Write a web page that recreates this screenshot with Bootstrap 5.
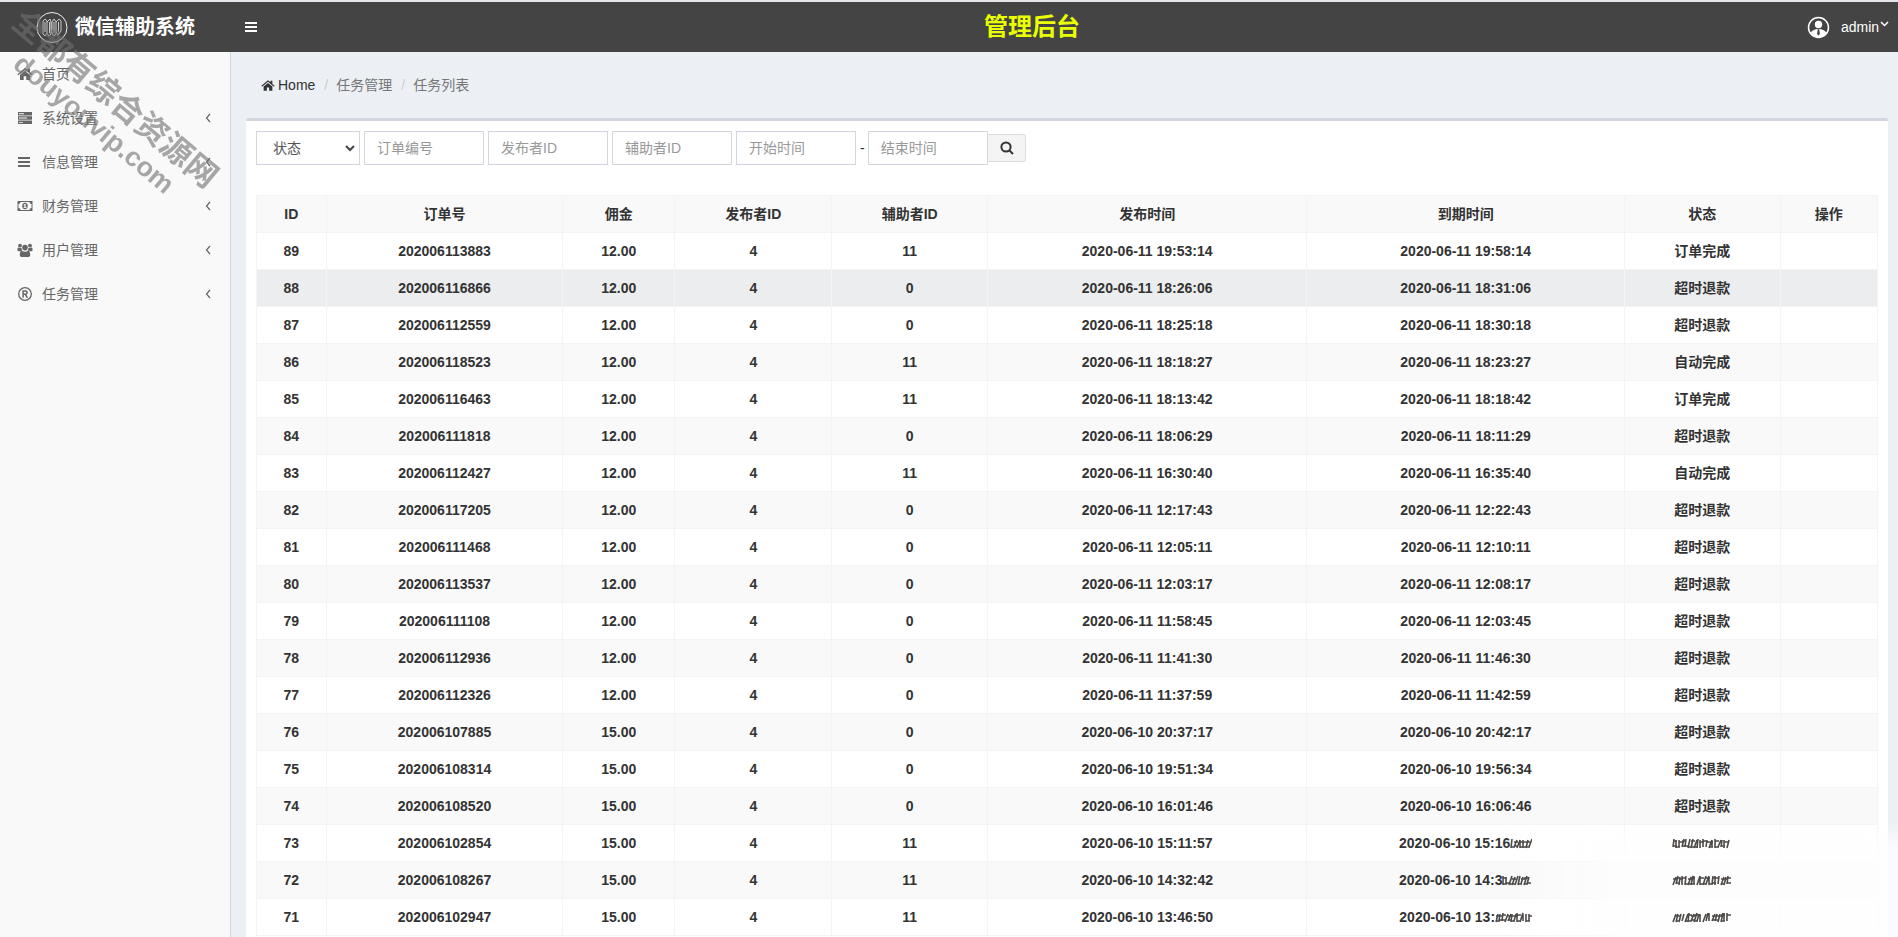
<!DOCTYPE html>
<html lang="zh-CN">
<head>
<meta charset="utf-8">
<meta name="viewport" content="width=device-width, initial-scale=1">
<title>管理后台</title>
<link href="https://cdn.jsdelivr.net/npm/bootstrap@5.3.0/dist/css/bootstrap.min.css" rel="stylesheet">
<style>
body{font:14px/20px "Liberation Sans","Noto Sans CJK SC",sans-serif;color:#333;background:#ecf0f5;height:100vh;overflow:hidden}
a{color:inherit;text-decoration:none}
svg{display:block;flex:none}
.topbar{background:#444;color:#fff;height:52px;border-top:2px solid #e3e5e8}
.brand-area{width:230px;font-size:20px;font-weight:700;padding-left:36px}
.brand-area svg{margin-right:7px}
.page-title{font-size:24px;line-height:30px;font-weight:700;color:#eaff00;margin:0}
.burger{width:44px;height:50px;border:0;background:none;color:#fff;padding:0 14px}
.user-link{width:108px;padding-left:17px}
.user-link .face{margin-right:11px}
.user-link .caret{margin:-6px 0 0 1px}
.side{width:231px;flex:none;background:#f9f9f9;border-right:1px solid #d2d6de;color:#666;min-height:calc(100vh - 52px)}
.side a{height:44px;padding:0 19px 0 17px}
.side a .glyph{margin-right:9px}
.main-area{min-width:0;padding:0 10px 0 15px}
.crumbs{height:66px;padding-left:15px;color:#777}
.crumbs a{color:#333}
.crumbs a svg{margin-right:3px}
.crumbs li+li::before{content:"/";color:#ccc;padding:0 8px 0 9px}
.panel{background:#fff;border-top:3px solid #d2d6de;border-radius:3px;padding:10px}
.filters .form-control,.filters .form-select{width:120px;height:34px;border:1px solid #d2d6de;border-radius:0;font-size:14px;line-height:20px;padding:6px 12px;color:#555;margin-right:4px}
.filters .form-select{width:104px;padding:6px 16px;appearance:none;background:#fff url("data:image/svg+xml,%3Csvg xmlns='http://www.w3.org/2000/svg' viewBox='0 0 10 7'%3E%3Cpath d='M1 1l4 4 4-4' fill='none' stroke='%23444' stroke-width='2'/%3E%3C/svg%3E") no-repeat right 4px center/10px 7px}
.filters .form-control::placeholder{color:#999}
.filters .form-control.last-field{margin:0 0 0 3px}
.find-btn{width:38px;height:28px;border:1px solid #ddd;border-left:0;border-radius:0 3px 3px 0;background:#f4f4f4;color:#333;padding:0 0 0 12px}
.orders{margin:30px 0 0;table-layout:fixed;font-weight:700;text-align:center;border-color:#f4f4f4}
.orders>:not(caption)>*>*{padding:8px;border:1px solid #f4f4f4;height:37px;line-height:20px;color:#333;background:#fff;white-space:nowrap}
.orders>thead>tr>th,.orders>tbody>tr:nth-child(even)>td{background:#f9f9f9}
.orders>tbody>tr.picked>td{background:#ebedef}
.ink{display:inline-block;vertical-align:-1px}
.fade-patch{position:absolute;right:0;bottom:0;width:398px;height:116px;pointer-events:none;background:linear-gradient(90deg,rgba(254,254,254,0),rgba(254,254,254,.8) 30%,rgba(254,254,254,.8) 93%,rgba(252,253,254,.75));-webkit-mask:linear-gradient(180deg,transparent,#000 24px);mask:linear-gradient(180deg,transparent,#000 24px)}
.orders .ink{position:relative;z-index:2}
.stamp{position:absolute;left:-23px;top:78px;width:256px;transform:rotate(40deg);text-align:center;font-weight:700;color:#707070;opacity:.6;font-size:32px;line-height:34px;pointer-events:none;white-space:nowrap}
.stamp span{display:block;font-size:27px;line-height:32px}
</style>
</head>
<body class="position-relative">
<svg class="d-none" xmlns="http://www.w3.org/2000/svg">
 <symbol id="i-home" viewBox="0 0 16 14"><path fill="currentColor" d="M8 4L13 8V13H9.300V9.300H6.700V13H3V8zM8 1L10.800 3.300V1.500H13V5.200L15.600 7.300L14.800 8.300L8 2.800L1.200 8.300L.4 7.300z"/></symbol>
 <symbol id="i-server" viewBox="0 0 16 14"><path fill="currentColor" fill-rule="evenodd" d="M1 1h14v3.500H1zm1 1.300v.9h5v-.9zM1 5.300h14v3.500H1zm1 1.300v.9h8v-.9zM1 9.600h14v3.500H1zm1 1.300v.9h4v-.9z"/></symbol>
 <symbol id="i-bars" viewBox="0 0 16 14"><path fill="currentColor" d="M1 2h12v2H1zm0 4h12v2H1zm0 4h12v2H1z"/></symbol>
 <symbol id="i-money" viewBox="0 0 16 14"><path fill="currentColor" fill-rule="evenodd" d="M.5 2h15v10H.5zM3.500 3a2 2 0 0 1-2 2v4a2 2 0 0 1 2 2h9a2 2 0 0 1 2-2V5a2 2 0 0 1-2-2zM8 3.800c3.700 0 3.700 6.400 0 6.400s-3.700-6.400 0-6.400zM7.600 5L6.500 5.900l.4.600.5-.3v2h-.8V9h2.900v-.8h-.8V5z"/></symbol>
 <symbol id="i-users" viewBox="0 0 16 14"><g fill="currentColor"><circle cx="3" cy="2.600" r="1.900"/><circle cx="13" cy="2.600" r="1.900"/><circle cx="8" cy="4.600" r="2.800"/><path d="M.5 7.500V6c0-1.500.8-1.800 1.500-1.300 1 .5 1.800.5 2.400.1.100 1.200.4 1.900 1 2.600-.8 0-1.500.3-2 .8H1.600C.9 8.200.5 8 .5 7.500zM15.500 7.500V6c0-1.500-.8-1.800-1.500-1.300-1 .5-1.800.5-2.400.1-.1 1.200-.4 1.900-1 2.600.8 0 1.500.3 2 .8h1.800c.7 0 1.100-.2 1.100-.7zM2.800 12c0-2.500.6-4.300 2.200-4.300 1.500 1.300 4.500 1.300 6 0 1.600 0 2.200 1.800 2.200 4.300 0 1.200-.7 2-1.800 2H4.600c-1.100 0-1.800-.8-1.800-2z"/></g></symbol>
 <symbol id="i-reg" viewBox="0 0 16 14"><g fill="none" stroke="currentColor"><circle cx="8" cy="7" r="6.300" stroke-width="1.300"/><path stroke-width="1.500" d="M6.100 10.800V3.900h2.200c2.400 0 2.400 3.400 0 3.400H6.100m2.200 0l2.100 3.500"/></g></symbol>
 <symbol id="i-left" viewBox="0 0 6 10"><path d="M5 1L1.500 5 5 9" fill="none" stroke="currentColor" stroke-width="1.200"/></symbol>
</svg>
<header class="topbar d-flex align-items-center">
 <a href="#" class="brand-area d-flex align-items-center">
  <svg width="32" height="32" viewBox="0 0 32 32" fill="none" stroke="#eee"><circle cx="16" cy="16.500" r="15"/><path d="M7 23V10l2-2 2 2v12l-2 3zM11 11l3-3 1 3v12l-2 2-2-3M16 11l2-3 2 3v12l-2 2-2-3zM20 11l3-3 2 2v10l-3 4-2-3M9 11v10M13.500 11v11M18 11v11M22.500 11v10" stroke-width=".8"/></svg>微信辅助系统</a>
 <button type="button" class="burger" aria-label="菜单"><svg width="16" height="14"><use href="#i-bars"/></svg></button>
 <h1 class="page-title flex-grow-1 text-center">管理后台</h1>
 <a href="#" class="user-link d-flex align-items-center">
  <svg class="face" width="23" height="23" viewBox="0 0 23 23"><circle cx="11.500" cy="11.500" r="10" fill="none" stroke="#fff" stroke-width="1.500"/><circle cx="11.500" cy="8.500" r="3.700" fill="#fff"/><path fill="#fff" d="M3.500 17c1.500-2.500 4-3.700 6.500-4l1.500 1 1.500-1c2.500.3 5 1.500 6.500 4-4 6-12 6-16 0z"/><path fill="#444" d="M10.700 14h1.600l.6 4-1.400 1.500-1.400-1.500z"/></svg>admin<svg class="caret" width="9" height="6" viewBox="0 0 9 6"><path d="M1 1l3.500 3.500L8 1" fill="none" stroke="#fff" stroke-width="1.500"/></svg></a>
</header>
<div class="d-flex">
 <nav class="side">
  <a href="#" class="d-flex align-items-center"><svg class="glyph" width="16" height="14"><use href="#i-home"/></svg>首页</a>
  <a href="#" class="d-flex align-items-center"><svg class="glyph" width="16" height="14"><use href="#i-server"/></svg>系统设置<svg class="ms-auto" width="6" height="10"><use href="#i-left"/></svg></a>
  <a href="#" class="d-flex align-items-center"><svg class="glyph" width="16" height="14"><use href="#i-bars"/></svg>信息管理<svg class="ms-auto" width="6" height="10"><use href="#i-left"/></svg></a>
  <a href="#" class="d-flex align-items-center"><svg class="glyph" width="16" height="14"><use href="#i-money"/></svg>财务管理<svg class="ms-auto" width="6" height="10"><use href="#i-left"/></svg></a>
  <a href="#" class="d-flex align-items-center"><svg class="glyph" width="16" height="14"><use href="#i-users"/></svg>用户管理<svg class="ms-auto" width="6" height="10"><use href="#i-left"/></svg></a>
  <a href="#" class="d-flex align-items-center"><svg class="glyph" width="16" height="14"><use href="#i-reg"/></svg>任务管理<svg class="ms-auto" width="6" height="10"><use href="#i-left"/></svg></a>
 </nav>
 <main class="main-area flex-grow-1">
  <ol class="crumbs list-unstyled d-flex align-items-center mb-0">
   <li><a href="#" class="d-flex align-items-center"><svg width="14" height="13"><use href="#i-home"/></svg>Home</a></li><li>任务管理</li><li>任务列表</li>
  </ol>
  <section class="panel">
   <form class="filters d-flex align-items-center">
    <select class="form-select" aria-label="状态"><option>状态</option></select>
    <input class="form-control" placeholder="订单编号" aria-label="订单编号">
    <input class="form-control" placeholder="发布者ID" aria-label="发布者ID">
    <input class="form-control" placeholder="辅助者ID" aria-label="辅助者ID">
    <input class="form-control" placeholder="开始时间" aria-label="开始时间">
    <span>-</span>
    <input class="form-control last-field" placeholder="结束时间" aria-label="结束时间">
    <button type="button" class="find-btn" aria-label="搜索"><svg width="14" height="14" viewBox="0 0 14 14" fill="none" stroke="currentColor" stroke-width="2"><circle cx="6" cy="6" r="4.600"/><path d="M9.400 9.400L13 13"/></svg></button>
   </form>
   <table class="table orders">
    <colgroup><col style="width:4.3%"><col style="width:14.6%"><col style="width:6.9%"><col style="width:9.7%"><col style="width:9.6%"><col style="width:19.7%"><col style="width:19.6%"><col style="width:9.6%"><col style="width:6%"></colgroup>
    <thead><tr><th>ID</th><th>订单号</th><th>佣金</th><th>发布者ID</th><th>辅助者ID</th><th>发布时间</th><th>到期时间</th><th>状态</th><th>操作</th></tr></thead>
    <tbody id="rows"></tbody>
   </table>
  </section>
 </main>
</div>
<div class="fade-patch"></div>
<div class="stamp">全都有综合资源网<span>douyouvip.com</span></div>
<script>
// id, order number, fee, helper, published, expires, status
const orders = `89|202006113883|12.00|11|2020-06-11 19:53:14|2020-06-11 19:58:14|订单完成
88|202006116866|12.00|0|2020-06-11 18:26:06|2020-06-11 18:31:06|超时退款
87|202006112559|12.00|0|2020-06-11 18:25:18|2020-06-11 18:30:18|超时退款
86|202006118523|12.00|11|2020-06-11 18:18:27|2020-06-11 18:23:27|自动完成
85|202006116463|12.00|11|2020-06-11 18:13:42|2020-06-11 18:18:42|订单完成
84|202006111818|12.00|0|2020-06-11 18:06:29|2020-06-11 18:11:29|超时退款
83|202006112427|12.00|11|2020-06-11 16:30:40|2020-06-11 16:35:40|自动完成
82|202006117205|12.00|0|2020-06-11 12:17:43|2020-06-11 12:22:43|超时退款
81|202006111468|12.00|0|2020-06-11 12:05:11|2020-06-11 12:10:11|超时退款
80|202006113537|12.00|0|2020-06-11 12:03:17|2020-06-11 12:08:17|超时退款
79|202006111108|12.00|0|2020-06-11 11:58:45|2020-06-11 12:03:45|超时退款
78|202006112936|12.00|0|2020-06-11 11:41:30|2020-06-11 11:46:30|超时退款
77|202006112326|12.00|0|2020-06-11 11:37:59|2020-06-11 11:42:59|超时退款
76|202006107885|15.00|0|2020-06-10 20:37:17|2020-06-10 20:42:17|超时退款
75|202006108314|15.00|0|2020-06-10 19:51:34|2020-06-10 19:56:34|超时退款
74|202006108520|15.00|0|2020-06-10 16:01:46|2020-06-10 16:06:46|超时退款
73|202006102854|15.00|11|2020-06-10 15:11:57|2020-06-10 15:16~22|~60
72|202006108267|15.00|11|2020-06-10 14:32:42|2020-06-10 14:3~30|~60
71|202006102947|15.00|11|2020-06-10 13:46:50|2020-06-10 13:~37|~60`.split("\n").map(r => r.split("|"));

// scribbled-out text: irregular upright strokes of the given width
let seed = 7;
const rnd = () => (seed = seed * 16807 % 2147483647) / 2147483647;
const ink = w => {
  let d = "";
  for (let x = 1; x < w - 2; x += 3) {
    const a = 1 + Math.floor(rnd() * 2), b = 9 + Math.floor(rnd() * 2);
    d += `M${x} ${b}L${x + Math.floor(rnd() * 4)} ${a}`;
    if (rnd() > .4) d += `M${x} ${a + 2}h4`;
    if (rnd() > .4) d += `M${x} ${b - 1}h4`;
  }
  return `<svg class="ink" width="${w}" height="11" aria-hidden="true"><path d="${d}" fill="none" stroke="#2e2a28" stroke-width="1.6" opacity=".85"/></svg>`;
};
const cell = t => `<td>${t.replace(/~(\d+)/, (m, w) => ink(+w))}</td>`;
document.getElementById("rows").innerHTML = orders.map(([id, no, fee, helper, from, to, state]) =>
  `<tr${id === "88" ? ' class="picked"' : ""}>` + [id, no, fee, "4", helper, from, to, state, ""].map(cell).join("") + "</tr>").join("");
</script>
<script src="https://cdn.jsdelivr.net/npm/bootstrap@5.3.0/dist/js/bootstrap.bundle.min.js"></script>
</body>
</html>
